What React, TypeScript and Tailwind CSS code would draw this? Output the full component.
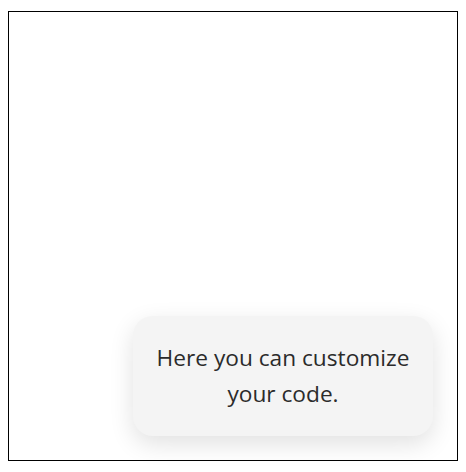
export default function App() {
  return (
    <div className="bg-white w-[466px] h-[472px] pt-[11px] pl-[8px]">
      <div className="relative w-[450px] h-[450px] border border-black">
        <div
          className="absolute right-[24px] bottom-[24px] w-[300px] rounded-[20px] bg-[#f4f4f4] px-5 py-6 text-center text-[22.7px] leading-[36px] text-[#2b2b2b] shadow-[0_8px_24px_rgba(0,0,0,0.12)]"
          style={{ fontFamily: '"Open Sans", sans-serif' }}
        >
          Here you can customize your code.
        </div>
      </div>
    </div>
  );
}
